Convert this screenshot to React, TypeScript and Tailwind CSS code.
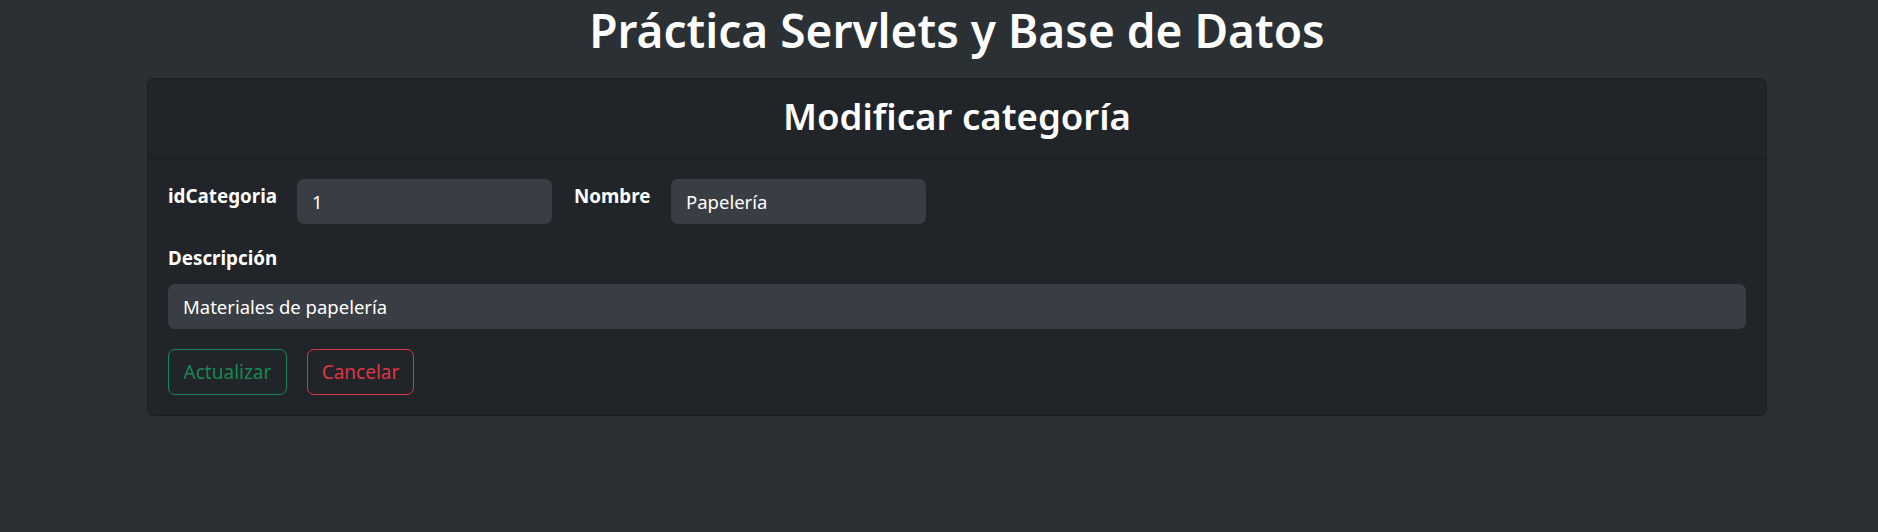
import React from 'react'

export default function App() {
  return (
    <div className="min-h-screen w-full bg-[#2b3035] font-['Noto_Sans',sans-serif] text-white">
      <div className="ml-[147px] w-[1620px]">
        <h1 className="h-[78px] pt-[1px] text-center text-[46px] font-semibold leading-[58px]">
          Práctica Servlets y Base de Datos
        </h1>

        <div className="rounded-[7px] border border-[#1b1e21] bg-[#212529]">
          <div className="flex h-[80px] items-center justify-center border-b border-[#1b1e21] pb-[6px]">
            <h2 className="text-[36.6px] font-semibold leading-[44px]">Modificar categoría</h2>
          </div>

          <form className="px-[20px] pt-[20px] pb-[20px]" onSubmit={(e) => e.preventDefault()}>
            <div className="flex items-start">
              <label htmlFor="idCategoria" className="w-[109px] pt-[3px] text-[18.8px] leading-[28px] font-bold">
                idCategoria
              </label>
              <input
                id="idCategoria"
                defaultValue="1"
                className="ml-[20px] h-[45px] w-[255px] rounded-[7px] bg-[#393d44] px-[15px] text-[18.5px] text-white outline-none"
              />
              <label htmlFor="nombre" className="ml-[22px] w-[77px] pt-[3px] text-[18.8px] leading-[28px] font-bold">
                Nombre
              </label>
              <input
                id="nombre"
                defaultValue="Papelería"
                className="ml-[20px] h-[45px] w-[255px] rounded-[7px] bg-[#393d44] px-[15px] text-[18.5px] text-white outline-none"
              />
            </div>

            <label htmlFor="descripcion" className="mt-[20px] block text-[18.8px] leading-[28px] font-bold">
              Descripción
            </label>
            <input
              id="descripcion"
              defaultValue="Materiales de papelería"
              className="mt-[12px] block h-[45px] w-full rounded-[7px] bg-[#393d44] px-[15px] text-[18.5px] text-white outline-none"
            />

            <div className="mt-[20px] flex gap-[20px]">
              <button
                type="submit"
                className="h-[46px] w-[119px] rounded-[7px] border border-[#198754] text-[19px] text-[#198754]"
              >
                Actualizar
              </button>
              <button
                type="button"
                className="h-[46px] w-[107px] rounded-[7px] border border-[#dc3545] text-[19px] text-[#dc3545]"
              >
                Cancelar
              </button>
            </div>
          </form>
        </div>
      </div>
    </div>
  )
}
